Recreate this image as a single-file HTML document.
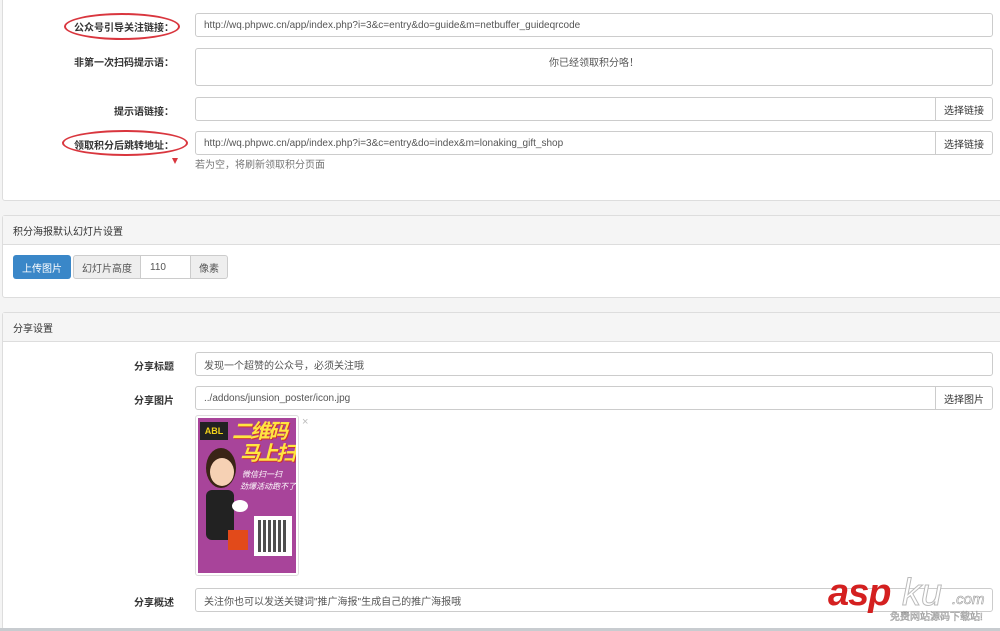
<!DOCTYPE html>
<html><head><meta charset="utf-8">
<style>
*{box-sizing:border-box;margin:0;padding:0}
body{width:1000px;height:631px;overflow:hidden;background:#f4f4f4;font-family:"Liberation Sans","Noto Sans CJK SC",sans-serif;font-size:10px;color:#333;position:relative}
.a{position:absolute}
.panel{position:absolute;left:2px;width:1010px;background:#fff;border:1px solid #ddd;border-radius:3px}
.ph{position:absolute;left:0;right:0;top:0;height:29px;background:#f5f5f5;border-bottom:1px solid #ddd;padding:0 10px;font-size:10px;color:#333;display:flex;align-items:center}
.inp{position:absolute;background:#fff;border:1px solid #ccc;border-radius:3px;padding:0 8px;color:#555;font-size:10px;white-space:nowrap;overflow:hidden;display:flex;align-items:center}
.lbl{position:absolute;text-align:right;font-weight:bold;font-size:10px;color:#333;width:180px;line-height:12px}
.btn{position:absolute;background:#fff;border:1px solid #ccc;border-radius:0 3px 3px 0;font-size:10px;color:#333;display:flex;align-items:center;justify-content:center}
.fc{display:flex;align-items:center;justify-content:center}
.oval{position:absolute;border:2px solid #d9363e;border-radius:50%}
</style></head><body>
<div class="panel" style="top:-5px;height:206px"></div>
<div class="lbl" style="left:-6px;top:23px">公众号引导关注链接：</div>
<div class="oval" style="left:64px;top:13px;width:116px;height:27px"></div>
<div class="inp" style="left:195px;top:13px;width:798px;height:24px">http://wq.phpwc.cn/app/index.php?i=3&amp;c=entry&amp;do=guide&amp;m=netbuffer_guideqrcode</div>
<div class="lbl" style="left:-6px;top:58px">非第一次扫码提示语：</div>
<div class="inp" style="left:195px;top:48px;width:798px;height:38px;justify-content:center;align-items:flex-start;padding-top:5px">你已经领取积分咯！</div>
<div class="lbl" style="left:-6px;top:107px">提示语链接：</div>
<div class="inp" style="left:195px;top:97px;width:742px;height:24px;border-radius:3px 0 0 3px"></div>
<div class="btn" style="left:935px;top:97px;width:58px;height:24px">选择链接</div>
<div class="lbl" style="left:-6px;top:141px">领取积分后跳转地址：</div>
<div class="oval" style="left:62px;top:130px;width:126px;height:26px"></div>
<div class="a" style="left:172px;top:158px;width:0;height:0;border-left:3px solid transparent;border-right:3px solid transparent;border-top:6px solid #d9363e"></div>
<div class="inp" style="left:195px;top:131px;width:742px;height:24px;border-radius:3px 0 0 3px">http://wq.phpwc.cn/app/index.php?i=3&amp;c=entry&amp;do=index&amp;m=lonaking_gift_shop</div>
<div class="btn" style="left:935px;top:131px;width:58px;height:24px">选择链接</div>
<div class="a" style="left:195px;top:160px;color:#777;font-size:10px;line-height:12px">若为空，将刷新领取积分页面</div>

<div class="panel" style="top:215px;height:83px"><div class="ph">积分海报默认幻灯片设置</div></div>
<div class="a fc" style="left:13px;top:255px;width:58px;height:24px;background:#3a87c8;border-radius:3px;color:#fff">上传图片</div>
<div class="a fc" style="left:73px;top:255px;width:68px;height:24px;background:#eee;border:1px solid #ccc;border-radius:3px 0 0 3px;color:#555">幻灯片高度</div>
<div class="a" style="left:140px;top:255px;width:51px;height:24px;background:#fff;border:1px solid #ccc;padding-left:9px;color:#555;display:flex;align-items:center">110</div>
<div class="a fc" style="left:190px;top:255px;width:38px;height:24px;background:#eee;border:1px solid #ccc;border-radius:0 3px 3px 0;color:#555">像素</div>

<div class="panel" style="top:312px;height:318px"><div class="ph">分享设置</div></div>
<div class="lbl" style="left:-6px;top:362px">分享标题</div>
<div class="inp" style="left:195px;top:352px;width:798px;height:24px">发现一个超赞的公众号，必须关注哦</div>
<div class="lbl" style="left:-6px;top:396px">分享图片</div>
<div class="inp" style="left:195px;top:386px;width:742px;height:24px;border-radius:3px 0 0 3px">../addons/junsion_poster/icon.jpg</div>
<div class="btn" style="left:935px;top:386px;width:58px;height:24px">选择图片</div>
<div class="a" style="left:195px;top:415px;width:104px;height:161px;background:#fff;border:1px solid #ddd;border-radius:3px"></div>
<div class="a" style="left:198px;top:418px;width:98px;height:155px;background:#a8449a;overflow:hidden">
 <div class="a" style="left:2px;top:4px;width:28px;height:18px;background:#222;color:#f2d21b;font-weight:bold;font-size:9px;line-height:18px;text-align:center">ABL</div>
 <div class="a" style="left:34px;top:2px;color:#ffe640;font-weight:bold;font-size:20px;font-style:italic;letter-spacing:-2px;text-shadow:1px 1px #c33;line-height:24px">二维码</div>
 <div class="a" style="left:42px;top:24px;color:#ffe640;font-weight:bold;font-size:20px;font-style:italic;letter-spacing:-2px;text-shadow:1px 1px #c33;line-height:24px">马上扫</div>
 <div class="a" style="left:44px;top:52px;color:#fff;font-size:8px;font-style:italic;line-height:10px">微信扫一扫</div>
 <div class="a" style="left:42px;top:64px;color:#fff;font-size:8px;font-style:italic;line-height:10px;white-space:nowrap">劲爆活动跑不了!!</div>
 <div class="a" style="left:8px;top:30px;width:30px;height:40px;border-radius:50%;background:#3a2416"></div>
 <div class="a" style="left:12px;top:40px;width:24px;height:28px;border-radius:50%;background:#f6d1b4"></div>
 <div class="a" style="left:8px;top:72px;width:28px;height:50px;background:#222;border-radius:6px"></div>
 <div class="a" style="left:30px;top:112px;width:20px;height:20px;background:#e24a1a"></div>
 <div class="a" style="left:34px;top:82px;width:16px;height:12px;background:#fff;border-radius:50%"></div>
 <div class="a" style="left:56px;top:98px;width:38px;height:40px;background:#fff"></div>
 <div class="a" style="left:60px;top:102px;width:30px;height:32px;background:repeating-linear-gradient(90deg,#222 0 3px,#fff 3px 5px),#222;opacity:.8"></div>
</div>
<div class="a" style="left:302px;top:416px;color:#bbb;font-size:11px;line-height:12px">×</div>
<div class="lbl" style="left:-6px;top:598px">分享概述</div>
<div class="inp" style="left:195px;top:588px;width:798px;height:24px">关注你也可以发送关键词"推广海报"生成自己的推广海报哦</div>
<div class="a" style="left:0;top:628px;width:1000px;height:3px;background:#c8ccd0"></div>

<div class="a" style="left:828px;top:573px;font-family:'Liberation Sans',sans-serif;font-weight:bold;font-style:italic;font-size:38px;color:#d42020;letter-spacing:-1px;line-height:40px">asp</div>
<div class="a" style="left:902px;top:573px;font-family:'Liberation Sans',sans-serif;font-style:italic;font-size:38px;color:#fff;-webkit-text-stroke:1px #bbb;line-height:40px">ku</div>
<div class="a" style="left:952px;top:591px;font-style:italic;font-size:15px;color:#fff;-webkit-text-stroke:0.6px #999;line-height:18px">.com</div>
<div class="a" style="left:890px;top:612px;font-size:10px;color:#fff;-webkit-text-stroke:0.5px #999;line-height:12px">免费网站源码下载站!</div>
</body></html>
